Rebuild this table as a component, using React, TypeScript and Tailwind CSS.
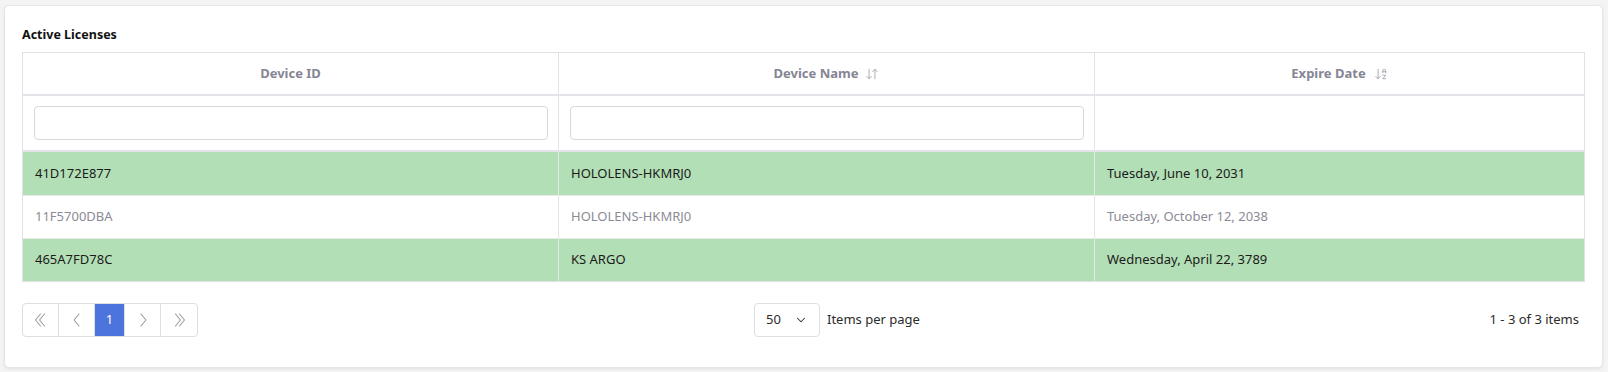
import React from "react";
import { ArrowDownUp, ArrowDownAZ, ChevronDown } from "lucide-react";

type License = { id: string; name: string; expires: string; active: boolean };

const licenses: License[] = [
  { id: "41D172E877", name: "HOLOLENS-HKMRJ0", expires: "Tuesday, June 10, 2031", active: true },
  { id: "11F5700DBA", name: "HOLOLENS-HKMRJ0", expires: "Tuesday, October 12, 2038", active: false },
  { id: "465A7FD78C", name: "KS ARGO", expires: "Wednesday, April 22, 3789", active: true },
];

const font = { fontFamily: '"Noto Sans", "Open Sans", Arial, sans-serif' };

// Thin, tall pager arrows: one or two chevrons pointing left or right.
function PagerArrow({ dir, double = false }: { dir: "left" | "right"; double?: boolean }) {
  const flip = dir === "right" ? "scale(-1,1) translate(-20,0)" : undefined;
  return (
    <svg width="20" height="20" viewBox="0 0 20 20" fill="none" stroke="currentColor" strokeWidth="1.1" strokeLinecap="round" strokeLinejoin="round">
      <g transform={flip}>
        {double ? (
          <>
            <polyline points="9.5,4 4.5,10 9.5,16" />
            <polyline points="13.5,4 8.5,10 13.5,16" />
          </>
        ) : (
          <polyline points="12,4 7,10 12,16" />
        )}
      </g>
    </svg>
  );
}

function PagerButton({
  children,
  active = false,
  wide = true,
  last = false,
}: {
  children: React.ReactNode;
  active?: boolean;
  wide?: boolean;
  last?: boolean;
}) {
  return (
    <button
      className={`flex h-full items-center justify-center ${wide ? "w-[36px]" : "w-[30px]"} ${
        last ? "" : "border-r border-[#dedee3]"
      } ${active ? "bg-[#4d74dd] text-white" : "text-[#9a9aa3]"} text-[13px]`}
    >
      {children}
    </button>
  );
}

export default function App() {
  return (
    <div className="h-[372px] w-[1608px] bg-[#f4f4f5] pt-[5px] pl-[4px] pr-[5px]" style={font}>
      <div className="flex h-[363px] flex-col rounded-[5px] border border-[#e6e6e9] bg-white px-[17px] pt-[21px] shadow-[0_1px_3px_rgba(0,0,0,0.08)]">
        <h2 className="mb-[9px] text-[12.5px] font-bold leading-[16px] text-[#111]">Active Licenses</h2>

        <div className="border border-[#e1e1e8] text-[13px]">
          {/* column headers */}
          <div className="grid h-[43px] grid-cols-[536px_536px_1fr] border-b-2 border-[#e3e3ea] font-bold text-[#858594]">
            <div className="flex items-center justify-center border-r border-[#e1e1e8]">Device ID</div>
            <div className="flex items-center justify-center gap-[7px] border-r border-[#e1e1e8]">
              <span>Device Name</span>
              <ArrowDownUp size={14} strokeWidth={1.4} className="text-[#9c9ca6]" />
            </div>
            <div className="flex items-center justify-center gap-[8px]">
              <span>Expire Date</span>
              <ArrowDownAZ size={14} strokeWidth={1.4} className="text-[#9c9ca6]" />
            </div>
          </div>

          {/* filter row */}
          <div className="grid h-[56px] grid-cols-[536px_536px_1fr] border-b-2 border-[#e3e3ea]">
            <div className="flex items-center border-r border-[#e1e1e8] pl-[11px] pr-[10px]">
              <input className="h-[34px] w-full rounded-[4px] border border-[#d8d8df] bg-white outline-none" />
            </div>
            <div className="flex items-center border-r border-[#e1e1e8] pl-[11px] pr-[10px]">
              <input className="h-[34px] w-full rounded-[4px] border border-[#d8d8df] bg-white outline-none" />
            </div>
            <div />
          </div>

          {/* data rows */}
          {licenses.map((l, i) => (
            <div
              key={l.id}
              className={`grid h-[43px] grid-cols-[536px_536px_1fr] ${
                l.active ? "bg-[#b3dfb6] text-[#1b1b1b]" : "bg-white text-[#8b8b95]"
              } ${i > 0 ? "border-t border-[#e8ece8]" : ""}`}
            >
              <div className="flex items-center border-r border-[#e1e6e1] pl-[12px]">{l.id}</div>
              <div className="flex items-center border-r border-[#e1e6e1] pl-[12px]">{l.name}</div>
              <div className="flex items-center pl-[12px]">{l.expires}</div>
            </div>
          ))}
        </div>

        {/* pager */}
        <div className="mt-[21px] flex h-[34px] items-center text-[13px] text-[#2b2b2b]">
          <div className="flex h-full overflow-hidden rounded-[4px] border border-[#dedee3]">
            <PagerButton>
              <PagerArrow dir="left" double />
            </PagerButton>
            <PagerButton>
              <PagerArrow dir="left" />
            </PagerButton>
            <PagerButton active wide={false}>
              1
            </PagerButton>
            <PagerButton>
              <PagerArrow dir="right" />
            </PagerButton>
            <PagerButton last>
              <PagerArrow dir="right" double />
            </PagerButton>
          </div>

          <div className="ml-[556px] flex h-full items-center gap-[7px]">
            <div className="flex h-full w-[66px] items-center justify-between rounded-[4px] border border-[#dedee3] pl-[11px] pr-[11px]">
              <span>50</span>
              <ChevronDown size={14} strokeWidth={1.8} className="text-[#333]" />
            </div>
            <span>Items per page</span>
          </div>

          <span className="ml-auto pr-[6px]">1 - 3 of 3 items</span>
        </div>
      </div>
    </div>
  );
}
